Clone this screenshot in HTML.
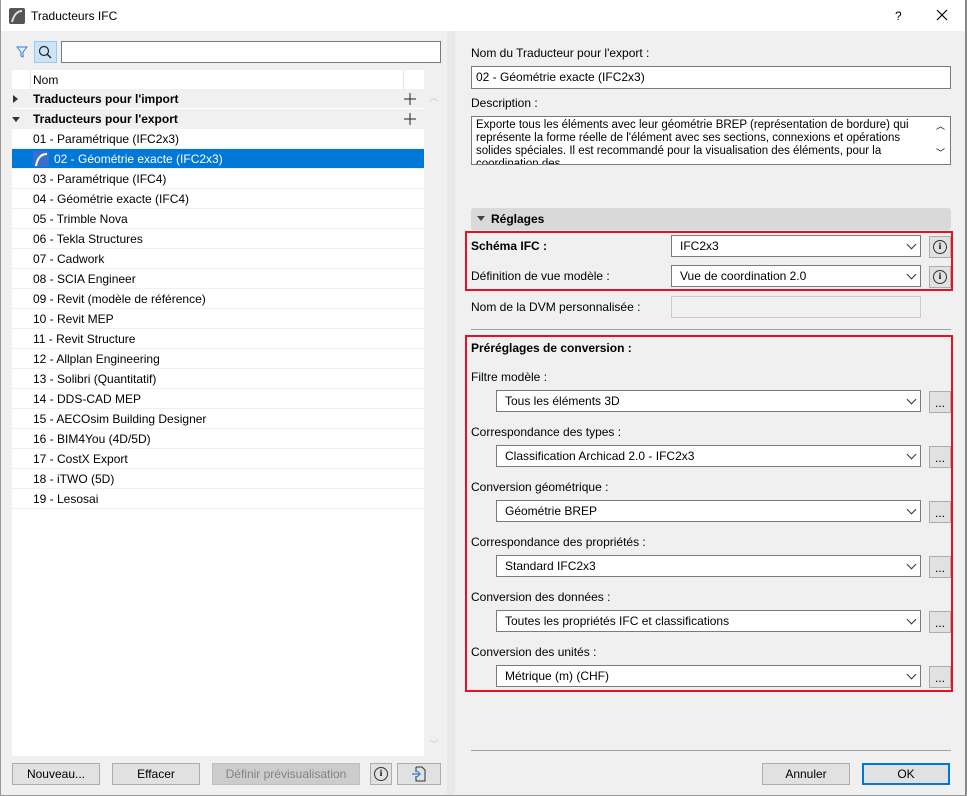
<!DOCTYPE html>
<html><head><meta charset="utf-8"><style>
*{box-sizing:border-box;margin:0;padding:0}
body{width:967px;height:796px;background:#f0f0f0;font-family:"Liberation Sans",sans-serif;font-size:12px;color:#000;position:relative;overflow:hidden}
.a{position:absolute}
.t{position:absolute;white-space:nowrap;line-height:14px}
.inp{position:absolute;background:#fff;border:1px solid #7a7a7a}
.sel{position:absolute;background:#fff;border:1px solid #7a7a7a;padding-left:8px;line-height:20px;font-size:12px}
.sel:after{content:"";position:absolute;right:5px;top:5px;width:6px;height:6px;border-right:1px solid #333;border-bottom:1px solid #333;transform:rotate(45deg)}
.btn{position:absolute;background:#e1e1e1;border:1px solid #adadad;text-align:center;line-height:20px}
.row{position:absolute;left:12px;width:412px;height:20px;line-height:20px;padding-left:21px;border-bottom:1px solid #f0f0f0;background:#fff}
.info{position:absolute;width:14px;height:14px;border:1.5px solid #333;border-radius:50%;font:bold 9px "Liberation Serif",serif;text-align:center;line-height:11px}
</style></head><body>
<div class="a" style="left:0;top:0;width:967px;height:31px;background:#fff"></div>
<div class="a" style="left:965px;top:0;width:2px;height:796px;background:#888"></div>
<div class="a" style="left:0;top:0;width:1px;height:796px;background:#999"></div>
<div class="a" style="left:0;top:795px;width:967px;height:1px;background:#999"></div>
<svg class="a" style="left:9px;top:8px" width="16" height="16"><rect width="16" height="16" rx="2" fill="#555"/><path d="M3 14 Q6 3 13 3" stroke="#ddd" stroke-width="2" fill="none"/></svg>
<div class="t" style="left:31px;top:9px;font-size:12px">Traducteurs IFC</div>
<div class="t" style="left:895px;top:9px">?</div>
<svg class="a" style="left:936px;top:9px" width="12" height="12"><path d="M1 1L11 11M11 1L1 11" stroke="#000" stroke-width="1.2"/></svg>

<svg class="a" style="left:16px;top:46px" width="12" height="12"><path d="M1 1H11L7 6V11L5 10V6Z" fill="none" stroke="#2a7de1" stroke-width="1"/></svg>
<div class="a" style="left:34px;top:41px;width:23px;height:22px;background:#cce4f7;border:1px solid #99c9ef"></div>
<svg class="a" style="left:38px;top:45px" width="14" height="14"><circle cx="6" cy="6" r="4.5" fill="none" stroke="#222" stroke-width="1.2"/><path d="M9 9L13 13" stroke="#222" stroke-width="1.3"/></svg>
<div class="inp" style="left:61px;top:41px;width:380px;height:22px"></div>

<div class="a" style="left:12px;top:70px;width:412px;height:686px;background:#fff"></div>
<div class="a" style="left:30px;top:70px;width:1px;height:19px;background:#e5e5e5"></div>
<div class="a" style="left:403px;top:70px;width:1px;height:19px;background:#e5e5e5"></div>
<div class="t" style="left:33px;top:73px">Nom</div>
<div class="a" style="left:12px;top:89px;width:412px;height:40px;background:#f0f0f0"></div>
<div class="a" style="left:12px;top:108px;width:412px;height:1px;background:#fff"></div>
<div class="a" style="left:13px;top:95px;border-left:5px solid #333;border-top:4px solid transparent;border-bottom:4px solid transparent"></div>
<div class="a" style="left:12px;top:117px;border-top:5px solid #333;border-left:4px solid transparent;border-right:4px solid transparent"></div>
<div class="t" style="left:33px;top:92px;font-weight:bold">Traducteurs pour l'import</div>
<div class="t" style="left:33px;top:112px;font-weight:bold">Traducteurs pour l'export</div>
<svg class="a" style="left:404px;top:93px" width="12" height="12"><path d="M6 0V12M0 6H12" stroke="#222" stroke-width="1"/></svg>
<svg class="a" style="left:404px;top:113px" width="12" height="12"><path d="M6 0V12M0 6H12" stroke="#222" stroke-width="1"/></svg>
<div class="t" style="left:429px;top:92px;color:#c8c8c8;font-size:10px">︿</div>
<div class="t" style="left:429px;top:739px;color:#c8c8c8;font-size:10px">﹀</div>

<div class="row" style="top:129px">01 - Paramétrique (IFC2x3)</div>
<div class="row" style="top:149px;background:#0078d7;color:#fff;padding-left:42px">02 - Géométrie exacte (IFC2x3)</div>
<svg class="a" style="left:33px;top:151px" width="16" height="16"><rect width="16" height="16" rx="2" fill="#3a6fd0"/><path d="M3 15 Q5 3 14 3" stroke="#fff" stroke-width="2" fill="none"/></svg>
<div class="row" style="top:169px">03 - Paramétrique (IFC4)</div>
<div class="row" style="top:189px">04 - Géométrie exacte (IFC4)</div>
<div class="row" style="top:209px">05 - Trimble Nova</div>
<div class="row" style="top:229px">06 - Tekla Structures</div>
<div class="row" style="top:249px">07 - Cadwork</div>
<div class="row" style="top:269px">08 - SCIA Engineer</div>
<div class="row" style="top:289px">09 - Revit (modèle de référence)</div>
<div class="row" style="top:309px">10 - Revit MEP</div>
<div class="row" style="top:329px">11 - Revit Structure</div>
<div class="row" style="top:349px">12 - Allplan Engineering</div>
<div class="row" style="top:369px">13 - Solibri (Quantitatif)</div>
<div class="row" style="top:389px">14 - DDS-CAD MEP</div>
<div class="row" style="top:409px">15 - AECOsim Building Designer</div>
<div class="row" style="top:429px">16 - BIM4You (4D/5D)</div>
<div class="row" style="top:449px">17 - CostX Export</div>
<div class="row" style="top:469px">18 - iTWO (5D)</div>
<div class="row" style="top:489px">19 - Lesosai</div>

<div class="btn" style="left:12px;top:763px;width:88px;height:22px">Nouveau...</div>
<div class="btn" style="left:112px;top:763px;width:88px;height:22px">Effacer</div>
<div class="btn" style="left:212px;top:763px;width:148px;height:22px;background:#cccccc;border-color:#bfbfbf;color:#838383">Définir prévisualisation</div>
<div class="btn" style="left:370px;top:763px;width:22px;height:22px"></div>
<div class="info" style="left:374px;top:767px">i</div>
<div class="btn" style="left:397px;top:763px;width:44px;height:22px"></div>
<svg class="a" style="left:411px;top:766px" width="16" height="16"><path d="M5 1H11L14 4V15H5V10M5 6V1" fill="none" stroke="#333"/><path d="M1 8H9M6 5L9 8L6 11" fill="none" stroke="#2a7de1" stroke-width="1.2"/></svg>

<div class="a" style="left:447px;top:31px;width:8px;height:764px;background:#e8e8e8"></div>

<div class="t" style="left:471px;top:46px">Nom du Traducteur pour l'export :</div>
<div class="inp" style="left:471px;top:66px;width:480px;height:23px;padding-left:4px;line-height:21px">02 - Géométrie exacte (IFC2x3)</div>
<div class="t" style="left:471px;top:96px">Description :</div>
<div class="inp" style="left:471px;top:116px;width:480px;height:49px;overflow:hidden;padding:2px 20px 0 4px;line-height:13px;font-size:11.5px">Exporte tous les éléments avec leur géométrie BREP (représentation de bordure) qui représente la forme réelle de l'élément avec ses sections, connexions et opérations solides spéciales. Il est recommandé pour la visualisation des éléments, pour la coordination des</div>
<div class="a" style="left:933px;top:117px;width:17px;height:47px;background:#fff"></div>
<div class="t" style="left:936px;top:119px;font-size:9px">︿</div>
<div class="t" style="left:936px;top:146px;font-size:9px">﹀</div>

<div class="a" style="left:471px;top:208px;width:480px;height:22px;background:#d9d9d9;border-radius:3px"></div>
<div class="a" style="left:477px;top:216px;border-top:5px solid #444;border-left:4px solid transparent;border-right:4px solid transparent"></div>
<div class="t" style="left:491px;top:212px;font-weight:bold">Réglages</div>

<div class="a" style="left:465px;top:231px;width:488px;height:60px;border:2px solid #e81123"></div>
<div class="t" style="left:471px;top:239px;font-weight:bold">Schéma IFC :</div>
<div class="sel" style="left:671px;top:235px;width:250px;height:22px">IFC2x3</div>
<div class="btn" style="left:929px;top:236px;width:22px;height:22px"></div>
<div class="info" style="left:933px;top:240px">i</div>
<div class="t" style="left:471px;top:269px">Définition de vue modèle :</div>
<div class="sel" style="left:671px;top:265px;width:250px;height:22px">Vue de coordination 2.0</div>
<div class="btn" style="left:929px;top:266px;width:22px;height:22px"></div>
<div class="info" style="left:933px;top:270px">i</div>
<div class="t" style="left:471px;top:300px">Nom de la DVM personnalisée :</div>
<div class="a" style="left:671px;top:296px;width:250px;height:22px;border:1px solid #ccc;background:#f0f0f0"></div>
<div class="a" style="left:471px;top:329px;width:480px;height:1px;background:#a0a0a0"></div>

<div class="a" style="left:465px;top:335px;width:488px;height:357px;border:2px solid #e81123"></div>
<div class="t" style="left:471px;top:341px;font-weight:bold">Préréglages de conversion :</div>

<div class="t" style="left:471px;top:370px">Filtre modèle :</div>
<div class="sel" style="left:496px;top:390px;width:425px;height:22px">Tous les éléments 3D</div>
<div class="btn" style="left:929px;top:391px;width:22px;height:22px;line-height:22px">...</div>
<div class="t" style="left:471px;top:425px">Correspondance des types :</div>
<div class="sel" style="left:496px;top:445px;width:425px;height:22px">Classification Archicad 2.0 - IFC2x3</div>
<div class="btn" style="left:929px;top:446px;width:22px;height:22px;line-height:22px">...</div>
<div class="t" style="left:471px;top:480px">Conversion géométrique :</div>
<div class="sel" style="left:496px;top:500px;width:425px;height:22px">Géométrie BREP</div>
<div class="btn" style="left:929px;top:501px;width:22px;height:22px;line-height:22px">...</div>
<div class="t" style="left:471px;top:535px">Correspondance des propriétés :</div>
<div class="sel" style="left:496px;top:555px;width:425px;height:22px">Standard IFC2x3</div>
<div class="btn" style="left:929px;top:556px;width:22px;height:22px;line-height:22px">...</div>
<div class="t" style="left:471px;top:590px">Conversion des données :</div>
<div class="sel" style="left:496px;top:610px;width:425px;height:22px">Toutes les propriétés IFC et classifications</div>
<div class="btn" style="left:929px;top:611px;width:22px;height:22px;line-height:22px">...</div>
<div class="t" style="left:471px;top:645px">Conversion des unités :</div>
<div class="sel" style="left:496px;top:665px;width:425px;height:22px">Métrique (m) (CHF)</div>
<div class="btn" style="left:929px;top:666px;width:22px;height:22px;line-height:22px">...</div>

<div class="a" style="left:471px;top:750px;width:480px;height:1px;background:#a0a0a0"></div>
<div class="btn" style="left:762px;top:763px;width:88px;height:22px">Annuler</div>
<div class="btn" style="left:862px;top:763px;width:88px;height:22px;border:2px solid #0078d7;line-height:18px">OK</div>
</body></html>
